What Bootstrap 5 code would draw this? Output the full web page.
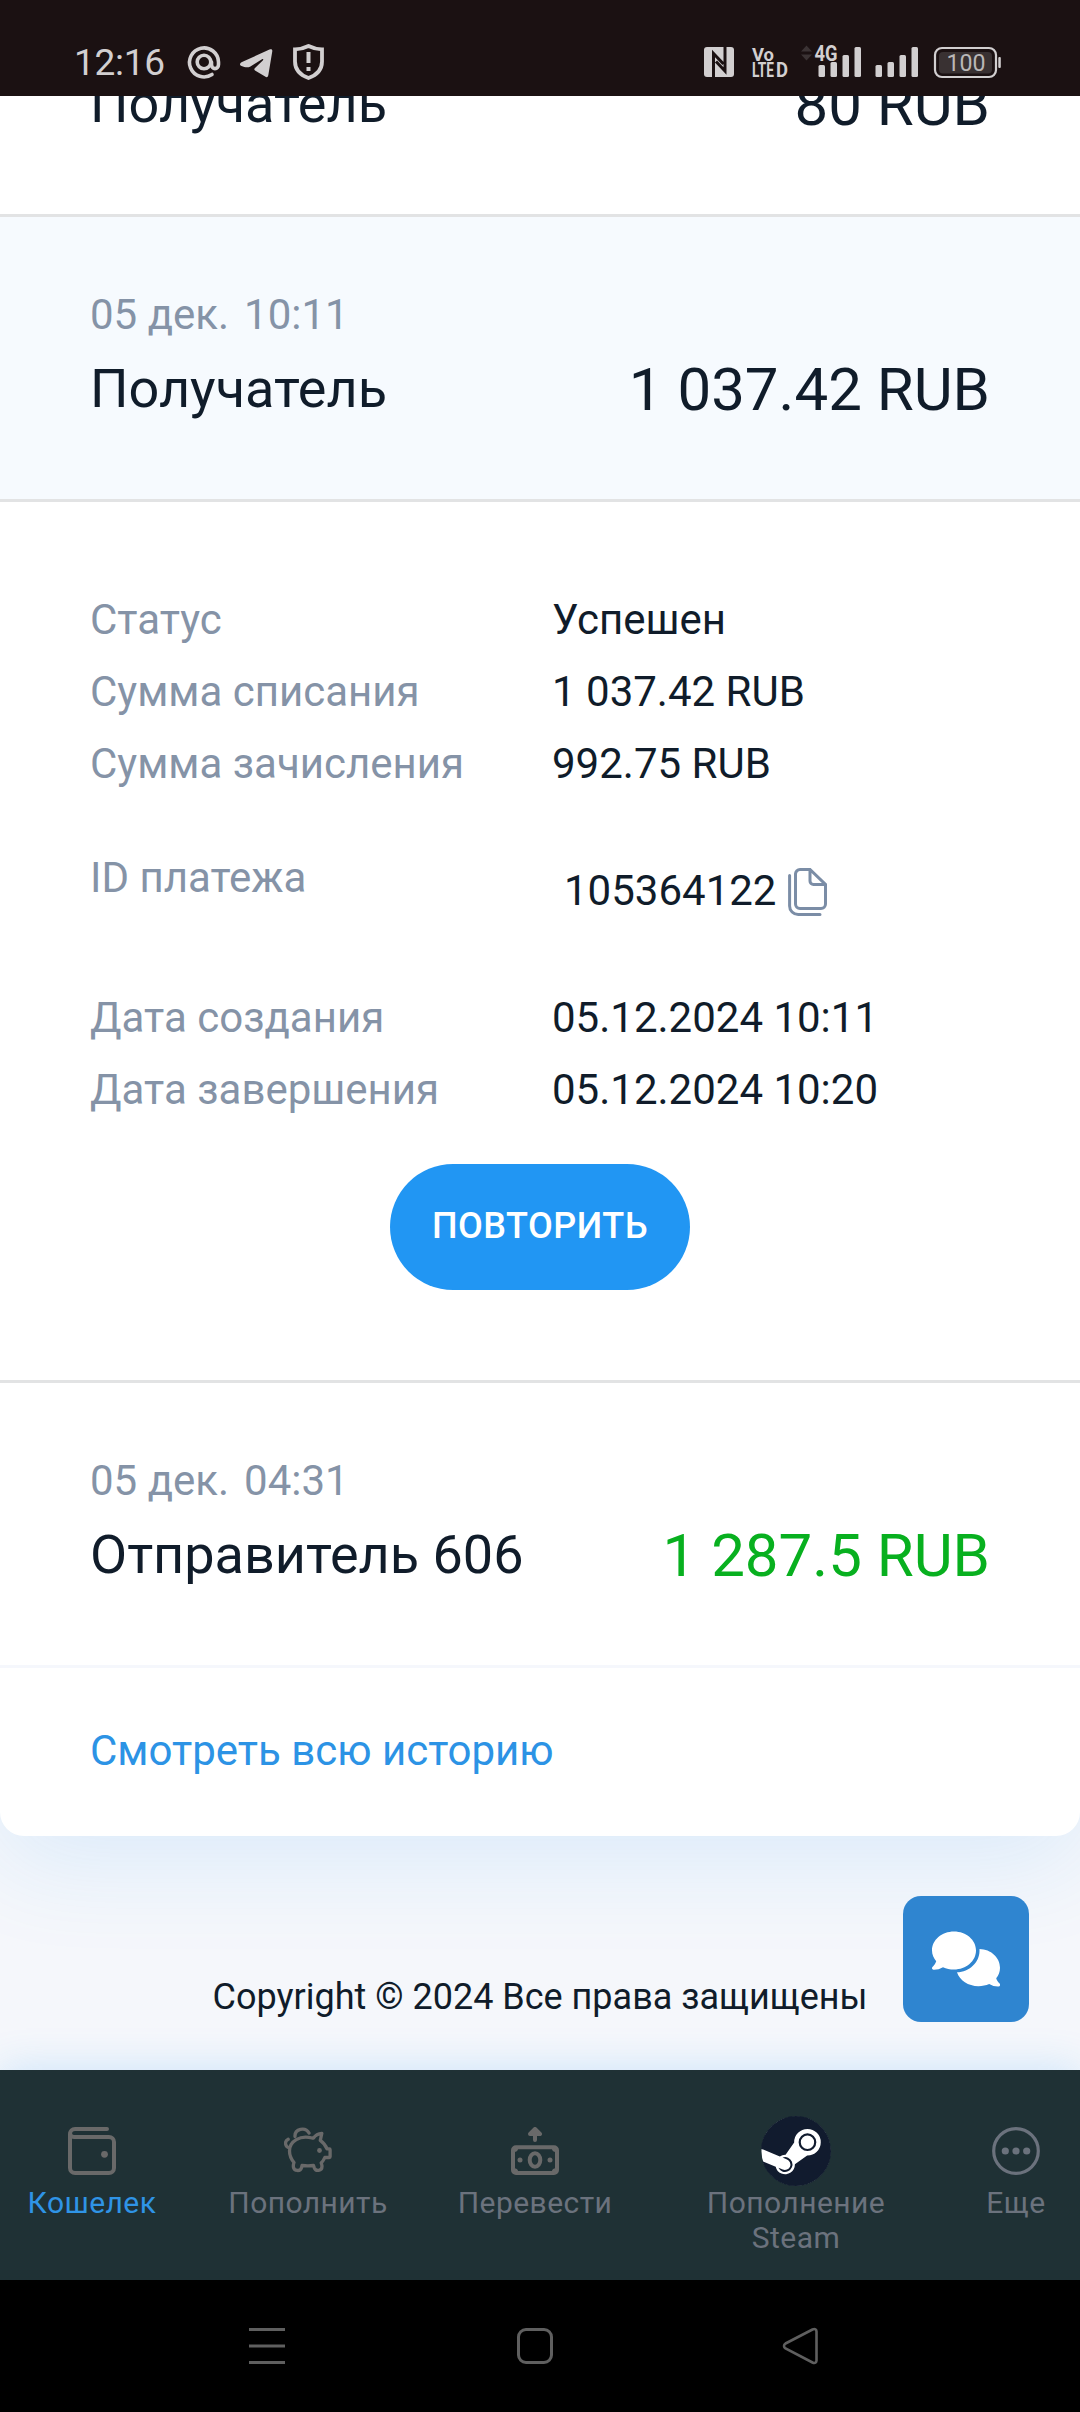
<!DOCTYPE html>
<html lang="ru">
<head>
<meta charset="utf-8">
<meta name="viewport" content="width=device-width, initial-scale=1">
<title>Кошелек</title>
<link href="https://cdn.jsdelivr.net/npm/bootstrap@5.3.0/dist/css/bootstrap.min.css" rel="stylesheet">
<style>
body{font-family:Roboto,"Noto Sans",sans-serif;background:#f5f7fb;color:#101c2a;font-size:42px;line-height:72px;width:1080px;height:2412px;overflow:hidden}
svg{display:block;flex:none}
.status-bar{height:96px;background:#1b1112;color:#d2cfd0;padding:28px 79px 0 74px}
.clock{font-size:37px;line-height:70px;height:68px;width:112px;letter-spacing:-.3px}
.status-icons{height:68px}
.history{background:#fff;border-radius:0 0 24px 24px;box-shadow:0 24px 100px rgba(33,150,243,.12)}
.op{height:285px;padding:66px 90px 0;border-bottom:3px solid #e2e3e4}
.op-cut{height:121px;padding:0 90px 67px;border-bottom:3px solid #e2e3e4}
.op-open{background:#f6fafe}
.op-last{border-bottom-color:#f5f7fc}
.op-date{line-height:63px;color:#8593a7}
.op-time{margin-left:15px}
.op-line{height:86px;font-size:54px}
.op-sum{font-size:60px;line-height:84px;padding-top:2px}
.income{color:#08b01f}
.details{height:881px;padding:82px 90px 0;border-bottom:3px solid #e2e3e4}
.d-label{width:462px;color:#8593a7}
.id-row{height:182px}
.id-row .d-label{padding-top:42px}
.id-value{padding:55px 0 0 12px}
.id-value svg{margin:13px 0 0 12px}
.btn-repeat{width:300px;height:126px;margin-top:38px;background:#2196f3;font-size:36px;line-height:36px;padding:0 0 3px;font-weight:500;letter-spacing:.5px}
.all-link{height:168px;padding:47px 90px 0;color:#2c93e5}
.site-foot{height:234px}
.copy-text{font-size:36px;line-height:54px;padding-top:133.5px}
.chat-btn{position:absolute;right:51px;top:60px;width:126px;height:126px;border-radius:18px;background:#2f85d0}
.tabs{height:210px;background:#1f3135;padding-top:57px;color:#6b727d;box-shadow:0 0 40px rgba(33,150,243,.2);font-size:30px;line-height:35px;letter-spacing:.45px}
.tab-item{gap:10px;color:inherit}
.tab-item.current{color:#2f94e6}
.tab-item svg{color:#696969}
.w-a{width:184px}.w-b{width:248px}.w-c{width:206px}.w-d{width:316px}.w-e{width:124px;margin-right:-2px}
.tab-item .more{color:#6b727d}
.tab-item .steam{margin:-11px 0}
.sys-nav{height:132px;background:#000}
</style>
<script src="https://cdn.jsdelivr.net/npm/bootstrap@5.3.0/dist/js/bootstrap.bundle.min.js"></script>
</head>
<body>
<header class="status-bar d-flex justify-content-between position-relative z-3">
  <div class="d-flex">
    <span class="clock">12:16</span>
    <svg width="138" height="68" viewBox="186 28 138 68" fill="none" stroke="#d2cfd0">
      <g stroke-width="3.600" stroke-linecap="round"><path d="M212 74.500A14.500 14.500 0 1 1 218.500 62v2.500c0 5.500-7 5.500-7 0V62"/><circle cx="204" cy="62" r="6.800"/></g>
      <path d="M240 64.500c0-1.300.8-2 2-2.500l27.500-12.500c2-.8 3 0 2.800 1.800l-4 24c-.4 2-1.700 2.300-3.200 1.300L255 70.500c-1-.8-1-1.600 0-2.500l8-7.800c.8-.9 0-1.600-1-1l-12 7.500c-2.300 1.200-5.500.6-8.500-.7-.9-.4-1.500-.8-1.500-1.500z" fill="#d2cfd0" stroke="none"/>
      <path d="M308.500 46c-4 2-9 3.300-13.500 3.300v12.200c0 8 5 13.500 13.500 16.500 8.500-3 13.500-8.500 13.500-16.500V49.300c-4.500 0-9.500-1.300-13.500-3.300z" stroke-width="3.800"/>
      <path d="M308.500 52v11M308.500 67v4" stroke-width="4"/>
    </svg>
  </div>
  <svg class="status-icons" width="297" height="68" viewBox="704 28 297 68" fill="#d2cfd0">
    <rect x="704" y="47" width="30" height="30" rx="3"/>
    <path d="M713.500 77V53.500l10 10.500M725 47v24l-9-9.500" fill="none" stroke="#1b1112" stroke-width="3"/>
    <g font-family="Roboto,sans-serif" font-weight="700">
      <text x="752" y="60.500" font-size="19" textLength="22" lengthAdjust="spacingAndGlyphs">Vo</text>
      <text x="752" y="76.800" font-size="19.500" textLength="22" lengthAdjust="spacingAndGlyphs">LTE</text>
      <text x="776" y="76.800" font-size="19.500" textLength="12" lengthAdjust="spacingAndGlyphs">D</text>
      <text x="814.500" y="60.500" font-size="22" textLength="23" lengthAdjust="spacingAndGlyphs">4G</text>
    </g>
    <path d="M801 51.500l5.500-6 5.500 6zM801 54.500l5.500 6 5.500-6z" fill="#3b3334"/>
    <g><rect x="818.500" y="65" width="6.500" height="12" rx="1.500"/><rect x="830.500" y="62" width="6.500" height="15" rx="1.500"/><rect x="842.500" y="55" width="6.500" height="22" rx="1.500"/><rect x="854.500" y="47" width="6.500" height="30" rx="1.500"/></g>
    <g><rect x="875.500" y="65" width="6.500" height="12" rx="1.500"/><rect x="887.500" y="62" width="6.500" height="15" rx="1.500"/><rect x="899.500" y="55" width="6.500" height="22" rx="1.500"/><rect x="911.500" y="47" width="6.500" height="30" rx="1.500"/></g>
    <rect x="935" y="48" width="61" height="29" rx="7" fill="none" stroke="#d2cfd0" stroke-width="2.200"/>
    <rect x="939" y="52" width="53" height="21.500" rx="4" fill="#393132"/>
    <rect x="998.300" y="57" width="2.500" height="11" rx="1"/>
    <text x="946.500" y="71.300" font-family="Roboto,sans-serif" font-size="24" textLength="39" lengthAdjust="spacingAndGlyphs" fill="#bab7b7">100</text>
  </svg>
</header>

<main class="history position-relative">
  <div class="op-cut d-flex flex-column justify-content-end overflow-hidden">
    <div class="op-line d-flex justify-content-between align-items-center flex-shrink-0"><span>Получатель</span><span class="op-sum">80 RUB</span></div>
  </div>
  <div class="op op-open">
    <div class="op-date">05 дек.<span class="op-time">10:11</span></div>
    <div class="op-line d-flex justify-content-between align-items-center"><span>Получатель</span><span class="op-sum">1 037.42 RUB</span></div>
  </div>
  <section class="details">
    <div class="d-flex"><span class="d-label">Статус</span><span>Успешен</span></div>
    <div class="d-flex"><span class="d-label">Сумма списания</span><span>1 037.42 RUB</span></div>
    <div class="d-flex"><span class="d-label">Сумма зачисления</span><span>992.75 RUB</span></div>
    <div class="id-row d-flex">
      <span class="d-label">ID платежа</span>
      <div class="id-value d-flex align-items-start"><span>105364122</span>
        <svg width="39" height="48" viewBox="0 0 39 48" fill="none" stroke="#7b8da6" stroke-width="3" stroke-linecap="round"><path d="M22 1.500H12a4.500 4.500 0 0 0-4.500 4.500v30a4.500 4.500 0 0 0 4.500 4.500h21a4.500 4.500 0 0 0 4.500-4.500V16.500zM22 1.500V13a3.500 3.500 0 0 0 3.500 3.500h12M1.600 7.500V38a8.500 8.500 0 0 0 8.500 8.500H32"/></svg>
      </div>
    </div>
    <div class="d-flex"><span class="d-label">Дата создания</span><span>05.12.2024 10:11</span></div>
    <div class="d-flex"><span class="d-label">Дата завершения</span><span>05.12.2024 10:20</span></div>
    <div class="d-flex justify-content-center"><button class="btn btn-repeat rounded-pill border-0 text-white">ПОВТОРИТЬ</button></div>
  </section>
  <div class="op op-last">
    <div class="op-date">05 дек.<span class="op-time">04:31</span></div>
    <div class="op-line d-flex justify-content-between align-items-center"><span>Отправитель 606</span><span class="op-sum income">1 287.5 RUB</span></div>
  </div>
  <a class="all-link d-block text-decoration-none">Смотреть всю историю</a>
</main>

<footer class="site-foot position-relative text-center">
  <div class="copy-text">Copyright © 2024 Все права защищены</div>
  <div class="chat-btn d-flex align-items-center justify-content-center">
    <svg width="68" height="56" viewBox="0 0 68 56" fill="#fff"><path d="M22 .5C34.200.5 44 9 44 19.500S34.200 38.500 22 38.500c-4 0-7.700-.8-11-2.300-3 1.800-6.300 2.600-9.500 2.500-1.700-.2-2-1.800-.8-3 1.600-1.600 2.800-3.400 3.500-5.500C1.700 27.200 0 23.500 0 19.500 0 9 9.800.5 22 .5z"/><path d="M47.500 18C59 18.300 68 26.500 68 36.800c0 4-1.400 7.500-3.800 10.500.6 2 1.700 3.600 3.200 5 1.200 1.300.8 3-.9 3.200-3.300.1-6.300-.7-9.300-2.500-3.300 1.400-6.800 2.200-10.700 2.200-10.300 0-18.900-5.800-21.500-13.900C37.500 41 47.300 31.500 47.500 20z"/></svg>
  </div>
</footer>

<nav class="tabs d-flex text-center position-relative">
  <a class="tab-item current w-a d-flex flex-column align-items-center text-decoration-none"><svg width="48" height="48" viewBox="0 0 48 48" fill="none" stroke="currentColor" stroke-width="4" stroke-linecap="round"><path d="M39 2H7a5 5 0 0 0-5 5v34a5 5 0 0 0 5 5h34a5 5 0 0 0 5-5V15a5 5 0 0 0-5-5H6a4 4 0 0 1-4-4"/><circle cx="36.500" cy="27.300" r="3.400" fill="currentColor" stroke="none"/></svg><span>Кошелек</span></a>
  <a class="tab-item w-b d-flex flex-column align-items-center text-decoration-none"><svg width="48" height="48" viewBox="0 0 48 48" fill="none" stroke="currentColor" stroke-width="3.300" stroke-linecap="round" stroke-linejoin="round"><path d="M28 11C16 8 5.500 14 5.500 24c0 4 1.500 8 4.500 11.500-.6 1.500-.8 3-.6 4.500.6 4.500 7 4.500 8.100.8l.5-2.300c4 .6 8 .6 11.500 0l.8 2.300c1.500 4 7.700 3 7.700-1.300 0-1.500-.4-2.500-.8-3.500 1.500-1.600 2.700-3.300 3.600-5.500h4.500c.5 0 .8-.3.800-.8v-7c0-.5-.3-.8-.8-.8H43c-1.300-3.500-3.600-6.200-6.700-8.500l1.500-7c-3.500.3-6.300 1.800-8.300 4.600zM5.500 21C1 20 0 14.500 4.200 12.300M11 9.500C10.500 1.500 21.500-.5 25 6"/><circle cx="35.500" cy="23.500" r="2.400" fill="currentColor" stroke="none"/></svg><span>Пополнить</span></a>
  <a class="tab-item w-c d-flex flex-column align-items-center text-decoration-none"><svg width="48" height="48" viewBox="0 0 48 48" fill="none" stroke="currentColor" stroke-width="4" stroke-linecap="round" stroke-linejoin="round"><rect x="2" y="20.300" width="44" height="25.700" rx="3"/><path d="M3 23.500c1.800 0 2.700-1 2.700-2.700M45 23.500c-1.800 0-2.700-1-2.700-2.700M3 42.800c1.800 0 2.700 1 2.700 2.700M45 42.800c-1.800 0-2.700 1-2.700 2.700" stroke-width="3"/><ellipse cx="24" cy="33" rx="5.300" ry="6.800"/><circle cx="9" cy="33" r="2.500" fill="currentColor" stroke="none"/><circle cx="39" cy="33" r="2.500" fill="currentColor" stroke="none"/><path d="M24 13V3M19 7l5-5 5 5z" /></svg><span>Перевести</span></a>
  <a class="tab-item w-d d-flex flex-column align-items-center text-decoration-none"><svg class="steam" width="70" height="70" viewBox="0 0 16 16"><circle cx="8" cy="8" r="7.900" fill="#fff"/><g fill="#111b2e"><path d="M.329 10.333A8.010 8.010 0 0 0 7.990 16C12.414 16 16 12.418 16 8s-3.586-8-8.009-8A8.006 8.006 0 0 0 0 7.468l.003.006 4.304 1.769A2.200 2.200 0 0 1 5.620 8.880l1.960-2.844-.001-.04a3.046 3.046 0 0 1 3.042-3.043 3.046 3.046 0 0 1 3.042 3.043 3.047 3.047 0 0 1-3.111 3.044l-2.804 2a2.223 2.223 0 0 1-3.075 2.110 2.220 2.220 0 0 1-1.312-1.568L.33 10.333Z"/><path d="M4.868 12.683a1.715 1.715 0 0 0 1.318-3.165 1.700 1.700 0 0 0-1.263-.02l1.023.424a1.261 1.261 0 1 1-.97 2.330l-.99-.41a1.700 1.700 0 0 0 .882.84Zm3.726-6.687a2.030 2.030 0 0 0 2.027 2.029 2.030 2.030 0 0 0 2.027-2.029 2.030 2.030 0 0 0-2.027-2.027 2.030 2.030 0 0 0-2.027 2.027m2.030-1.527a1.524 1.524 0 1 1-.002 3.048 1.524 1.524 0 0 1 .002-3.048"/></g></svg><span>Пополнение<br>Steam</span></a>
  <a class="tab-item w-e d-flex flex-column align-items-center text-decoration-none"><svg class="more" width="48" height="48" viewBox="0 0 48 48" fill="currentColor"><circle cx="24" cy="24" r="22.300" fill="none" stroke="currentColor" stroke-width="3.200"/><circle cx="13.300" cy="24" r="3.600"/><circle cx="24" cy="24" r="3.600"/><circle cx="34.700" cy="24" r="3.600"/></svg><span>Еще</span></a>
</nav>

<div class="sys-nav d-flex justify-content-center position-relative">
  <svg width="1080" height="132" viewBox="0 2280 1080 132" fill="none" stroke="#5f5f5f" stroke-width="3"><path d="M249 2329.500h36M249 2346h36M249 2362.500h36"/><rect x="518.500" y="2329.500" width="33" height="33" rx="7.500"/><path d="M785.500 2343.500l27-14c2.500-1.200 4 0 4 2v29c0 2-1.500 3.200-4 2l-27-14c-2-1.300-2-3.700 0-5z" stroke-width="2.600"/></svg>
</div>
</body>
</html>
